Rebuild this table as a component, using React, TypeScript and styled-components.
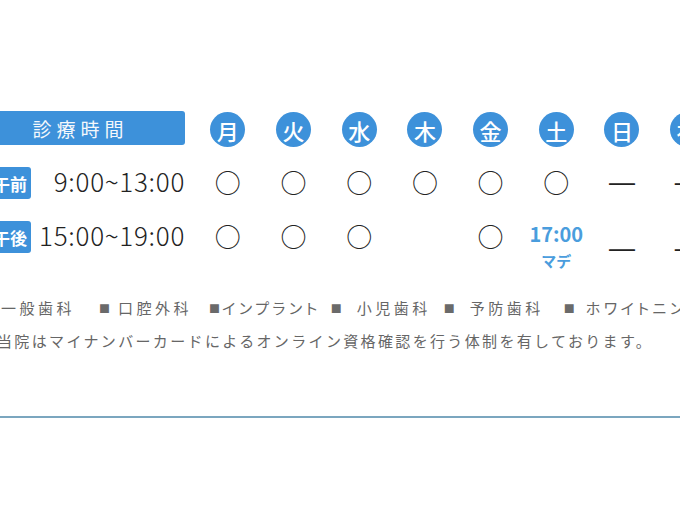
import React from 'react';
import styled, { createGlobalStyle } from 'styled-components';

const blue = '#3d91da';
const jpFont = '"Noto Sans CJK JP", "Noto Sans", sans-serif';

const GlobalStyle = createGlobalStyle`
  html, body {
    margin: 0;
    padding: 0;
    background: #fff;
  }
  body {
    font-family: ${jpFont};
  }
`;

const Page = styled.div`
  width: 680px;
  height: 510px;
  overflow: hidden;
  padding-top: 111px;
  box-sizing: border-box;
`;

const Schedule = styled.div`
  display: grid;
  grid-template-columns: 224px repeat(8, 65.7px);
  grid-template-rows: 38px 40px 40px;
  row-gap: 14px;
  margin-left: -29px;
`;

const HeadBar = styled.div`
  align-self: start;
  height: 34px;
  margin-right: 10px;
  border-radius: 3px;
  background: ${blue};
  color: #f4f8fc;
  display: flex;
  align-items: center;
  justify-content: center;
  font-size: 19px;
  letter-spacing: 5px;
  padding-left: 5px;
`;

const DayCell = styled.div`
  display: flex;
  justify-content: center;
  align-items: flex-start;
  padding-top: 1px;
`;

const DayBadge = styled.span`
  width: 35px;
  height: 35px;
  border-radius: 50%;
  background: ${blue};
  color: #fff;
  font-size: 22px;
  font-weight: 500;
  display: flex;
  align-items: center;
  justify-content: center;
`;

const TimeCell = styled.div`
  display: flex;
  align-items: center;
  justify-content: space-between;
  padding-left: 18px;
  padding-right: 10px;
`;

const Label = styled.span`
  height: 32px;
  padding: 0 4px;
  border-radius: 3px;
  background: ${blue};
  color: #fff;
  font-size: 17px;
  font-weight: 700;
  display: flex;
  align-items: center;
`;

const Time = styled.span`
  font-size: 26px;
  font-weight: 300;
  letter-spacing: 0.7px;
  color: #222;
  margin-top: -6px;
`;

const MarkCell = styled.div<{ $low?: boolean }>`
  display: flex;
  align-items: center;
  justify-content: center;
  padding-top: ${(p) => (p.$low ? '22px' : '0')};
  padding-bottom: ${(p) => (p.$low ? '0' : '3px')};
  font-size: 26px;
  line-height: 1;
  color: #222;
`;

const Dash = styled.span`
  font-family: "Liberation Sans", sans-serif;
  font-size: 26px;
  line-height: 1;
`;

const UntilCell = styled.div`
  display: flex;
  flex-direction: column;
  align-items: center;
  padding-top: 6px;
  color: #4a9ddd;
  font-weight: 700;
`;

const UntilTime = styled.span`
  font-size: 20px;
  line-height: 22px;
`;

const UntilNote = styled.span`
  font-size: 15px;
  line-height: 17px;
  margin-top: 7px;
`;

const Notes = styled.div`
  margin-top: 41px;
  color: #666;
  font-size: 15px;
`;

const Services = styled.div`
  display: flex;
  align-items: center;
  margin-left: -16px;
  white-space: nowrap;
  line-height: 20px;
`;

const Service = styled.span<{ $space: number; $after: number }>`
  display: inline-flex;
  align-items: center;
  gap: ${(p) => p.$space}px;
  margin-right: ${(p) => p.$after}px;
  letter-spacing: 3.5px;
  font-feature-settings: "palt";
`;

const Bullet = styled.span`
  font-size: 11px;
  letter-spacing: 0;
  color: #6a6a6a;
`;

const Notice = styled.p`
  margin: 13px 0 0 -3px;
  white-space: nowrap;
  letter-spacing: 2.35px;
  line-height: 20px;
`;

const Rule = styled.hr`
  margin: 65px 0 0;
  border: 0;
  height: 2px;
  background: #7ba6bf;
`;

const days = ['月', '火', '水', '木', '金', '土', '日', '祝'];

type Mark = 'open' | 'closed' | 'none' | 'until';

const rows: { label: string; time: string; marks: Mark[] }[] = [
  {
    label: '午前',
    time: '9:00~13:00',
    marks: ['open', 'open', 'open', 'open', 'open', 'open', 'closed', 'closed'],
  },
  {
    label: '午後',
    time: '15:00~19:00',
    marks: ['open', 'open', 'open', 'none', 'open', 'until', 'closed', 'closed'],
  },
];

const services = [
  { name: '一般歯科', space: 6, after: 24 },
  { name: '口腔外科', space: 8, after: 17 },
  { name: 'インプラント', space: 2, after: 10 },
  { name: '小児歯科', space: 15, after: 13 },
  { name: '予防歯科', space: 15, after: 20 },
  { name: 'ホワイトニング', space: 11, after: 0 },
];

const App: React.FC = () => {
  return (
    <Page>
      <GlobalStyle />
      <Schedule>
        <HeadBar>診療時間</HeadBar>
        {days.map((d) => (
          <DayCell key={d}>
            <DayBadge>{d}</DayBadge>
          </DayCell>
        ))}
        {rows.map((row, r) => (
          <React.Fragment key={row.label}>
            <TimeCell>
              <Label>{row.label}</Label>
              <Time>{row.time}</Time>
            </TimeCell>
            {row.marks.map((m, i) => {
              if (m === 'until') {
                return (
                  <UntilCell key={i}>
                    <UntilTime>17:00</UntilTime>
                    <UntilNote>マデ</UntilNote>
                  </UntilCell>
                );
              }
              return (
                <MarkCell key={i} $low={r === 1 && m === 'closed'}>
                  {m === 'open' && '○'}
                  {m === 'closed' && <Dash>—</Dash>}
                </MarkCell>
              );
            })}
          </React.Fragment>
        ))}
      </Schedule>
      <Notes>
        <Services>
          {services.map((s) => (
            <Service key={s.name} $space={s.space} $after={s.after}>
              <Bullet>■</Bullet>
              {s.name}
            </Service>
          ))}
        </Services>
        <Notice>当院はマイナンバーカードによるオンライン資格確認を行う体制を有しております。</Notice>
      </Notes>
      <Rule />
    </Page>
  );
};

export default App;
